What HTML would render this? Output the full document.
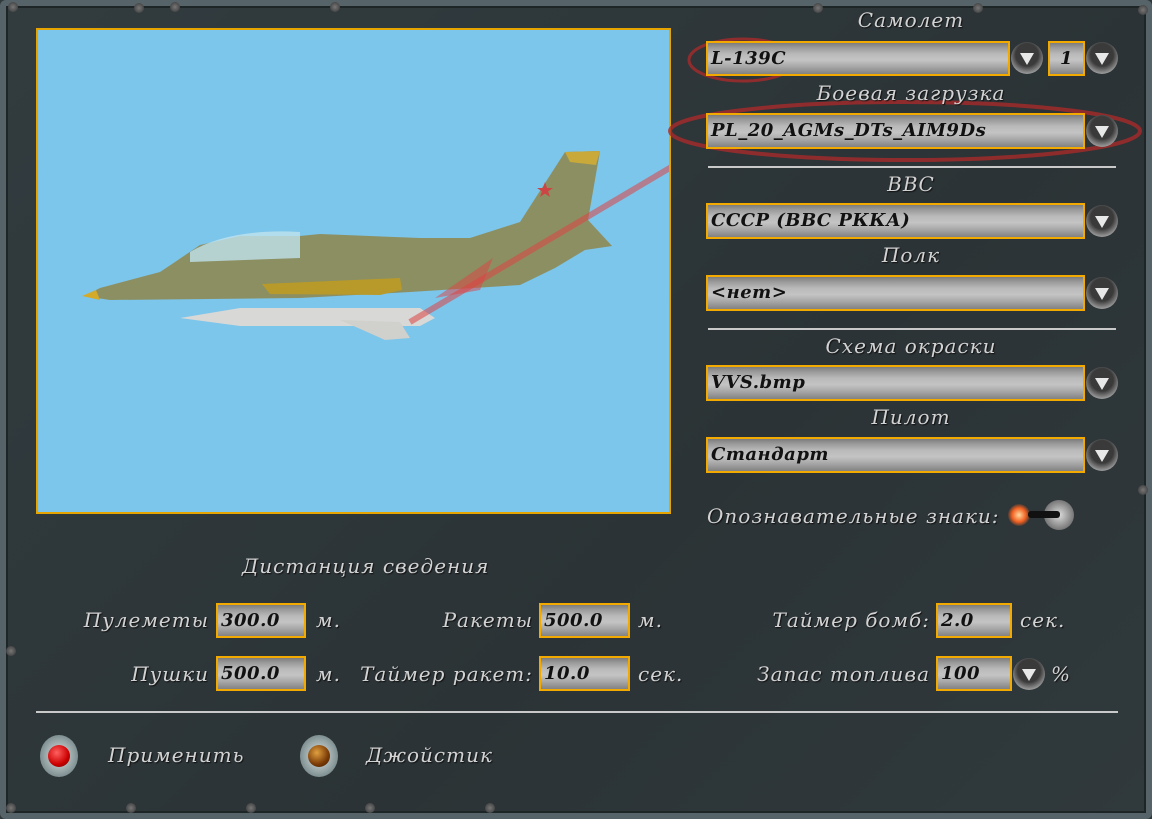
<!DOCTYPE html>
<html><head><meta charset="utf-8"><style>
*{margin:0;padding:0;box-sizing:border-box}
body{width:1152px;height:819px;overflow:hidden;background:#2f383b;position:relative;font-family:"DejaVu Serif","Liberation Serif",serif;font-style:italic;color:#d6d6d6}
.frame{position:absolute;left:0;top:0;width:1152px;height:819px;border:6px solid #56646a;border-radius:6px;box-shadow:inset 0 0 0 2px #1e2527;background:linear-gradient(135deg,#323c3f,#2b3336 60%,#30393c)}
.lbl{position:absolute;font-size:20px;letter-spacing:1px;white-space:nowrap;color:#d2d2d2;text-shadow:1px 1px 1px #111}
.f{position:absolute;border:2px solid #f2a900;background:linear-gradient(#7c7c7c 0%,#9a9a9a 15%,#b9b9b9 35%,#c4c4c4 55%,#a9a9a9 75%,#828282 100%);color:#111;font-weight:bold;font-size:18px;letter-spacing:0.5px;padding-left:3px;line-height:31px;white-space:nowrap;overflow:hidden}
.b{position:absolute;width:32px;height:32px;border-radius:50%;background:radial-gradient(circle at 50% 40%,#3a3a3a 45%,#6a6a6a 60%,#9a9a9a 75%,#555 100%)}
.b:after{content:"";position:absolute;left:9px;top:11px;border-left:7px solid transparent;border-right:7px solid transparent;border-top:12px solid #e8e8e8}
.hr{position:absolute;height:2px;background:#c9c9c9}
.c{text-align:center}
.scr{position:absolute;width:10px;height:10px;border-radius:50%;background:radial-gradient(#777,#333)}
</style></head><body>
<div class="frame"></div>
<div class="scr" style="left:8px;top:2px"></div><div class="scr" style="left:170px;top:2px"></div><div class="scr" style="left:330px;top:2px"></div>
<div class="scr" style="left:134px;top:3px"></div>
<div class="scr" style="left:6px;top:646px"></div>
<div class="scr" style="left:1138px;top:5px"></div><div class="scr" style="left:1138px;top:485px"></div>
<div class="scr" style="left:6px;top:803px"></div><div class="scr" style="left:126px;top:803px"></div><div class="scr" style="left:246px;top:803px"></div><div class="scr" style="left:365px;top:803px"></div><div class="scr" style="left:485px;top:803px"></div>
<div class="scr" style="left:813px;top:3px"></div><div class="scr" style="left:973px;top:3px"></div>

<div style="position:absolute;left:36px;top:28px;width:635px;height:486px;border:2px solid #e6a400;background:#7cc5eb;overflow:hidden">
<svg width="635" height="486" viewBox="36 28 635 486" style="position:absolute;left:-2px;top:-2px">
<path d="M565 152 L600 151 L588 220 L612 246 L585 250 L555 268 L520 285 L410 292 L300 298 L110 300 L84 296 L100 288 L160 272 L175 262 L200 245 L240 236 L300 236 L320 234 L420 238 L470 238 L520 222 Z" fill="#8c8f62"/>
<path d="M565 152 L600 151 L596 165 L570 162 Z" fill="#c9a93a"/>
<path d="M82 296 L96 290 L100 300 Z" fill="#d4aa2a"/>
<path d="M190 252 Q230 228 300 232 L300 258 L190 262 Z" fill="#bfe2ee" opacity=".8"/>
<path d="M262 284 L400 278 L402 290 L380 295 L270 294 Z" fill="#b89a2a"/>
<path d="M180 318 L240 308 L420 308 L435 318 L420 326 L240 326 Z" fill="#d8d8d6"/>
<path d="M340 320 L400 322 L410 338 L385 340 Z" fill="#d0d0cc"/>
<path d="M545 182 l5 15 l-13 -9 h16 l-13 9 z" fill="#c44"/>
<path d="M700 150 L410 322" stroke="#d44" stroke-width="6" opacity=".55"/>
<path d="M435 298 L493 258 L480 290 Z" fill="#d44" opacity=".5"/>
</svg></div>

<svg style="position:absolute;left:0;top:0" width="1152" height="819">
<ellipse cx="743" cy="60" rx="54" ry="21" fill="none" stroke="#a82a2a" stroke-width="3" opacity=".8"/>
<ellipse cx="905" cy="131" rx="235" ry="29" fill="none" stroke="#a82a2a" stroke-width="4" opacity=".8"/>
</svg>

<div class="lbl c" style="left:706px;width:410px;top:8px">Самолет</div>
<div class="f" style="left:706px;top:41px;width:304px;height:35px">L-139C</div>
<div class="b" style="left:1011px;top:42px"></div>
<div class="f" style="left:1048px;top:41px;width:37px;height:35px;text-align:center;padding:0">1</div>
<div class="b" style="left:1086px;top:42px"></div>
<div class="lbl c" style="left:706px;width:410px;top:81px">Боевая загрузка</div>
<div class="f" style="left:706px;top:113px;width:379px;height:36px">PL_20_AGMs_DTs_AIM9Ds</div>
<div class="b" style="left:1086px;top:115px"></div>
<div class="hr" style="left:708px;top:166px;width:408px"></div>
<div class="lbl c" style="left:706px;width:410px;top:172px">ВВС</div>
<div class="f" style="left:706px;top:203px;width:379px;height:36px">СССР (ВВС РККА)</div>
<div class="b" style="left:1086px;top:205px"></div>
<div class="lbl c" style="left:706px;width:410px;top:243px">Полк</div>
<div class="f" style="left:706px;top:275px;width:379px;height:36px">&lt;нет&gt;</div>
<div class="b" style="left:1086px;top:277px"></div>
<div class="hr" style="left:708px;top:328px;width:408px"></div>
<div class="lbl c" style="left:706px;width:410px;top:334px">Схема окраски</div>
<div class="f" style="left:706px;top:365px;width:379px;height:36px">VVS.bmp</div>
<div class="b" style="left:1086px;top:367px"></div>
<div class="lbl c" style="left:706px;width:410px;top:405px">Пилот</div>
<div class="f" style="left:706px;top:437px;width:379px;height:36px">Стандарт</div>
<div class="b" style="left:1086px;top:439px"></div>

<div class="lbl" style="left:707px;top:504px">Опознавательные знаки:</div>
<div style="position:absolute;left:1008px;top:504px;width:22px;height:22px;border-radius:50%;background:radial-gradient(#ffd9a0,#f06020 45%,rgba(200,60,20,0) 75%)"></div>
<div style="position:absolute;left:1044px;top:500px;width:30px;height:30px;border-radius:50%;background:radial-gradient(#ddd,#777 70%,#444)"></div>
<div style="position:absolute;left:1028px;top:511px;width:32px;height:7px;background:#111;border-radius:3px"></div>

<div class="lbl" style="left:242px;top:554px">Дистанция сведения</div>

<div class="lbl" style="right:943px;top:608px">Пулеметы</div>
<div class="f" style="left:216px;top:603px;width:90px;height:35px">300.0</div>
<div class="lbl" style="left:316px;top:608px">м.</div>
<div class="lbl" style="right:619px;top:608px">Ракеты</div>
<div class="f" style="left:539px;top:603px;width:91px;height:35px">500.0</div>
<div class="lbl" style="left:638px;top:608px">м.</div>
<div class="lbl" style="right:222px;top:608px">Таймер бомб:</div>
<div class="f" style="left:936px;top:603px;width:76px;height:35px">2.0</div>
<div class="lbl" style="left:1020px;top:608px">сек.</div>

<div class="lbl" style="right:943px;top:662px">Пушки</div>
<div class="f" style="left:216px;top:656px;width:90px;height:35px">500.0</div>
<div class="lbl" style="left:316px;top:662px">м.</div>
<div class="lbl" style="right:619px;top:662px">Таймер ракет:</div>
<div class="f" style="left:539px;top:656px;width:91px;height:35px">10.0</div>
<div class="lbl" style="left:638px;top:662px">сек.</div>
<div class="lbl" style="right:222px;top:662px">Запас топлива</div>
<div class="f" style="left:936px;top:656px;width:76px;height:35px">100</div>
<div class="b" style="left:1013px;top:658px"></div>
<div class="lbl" style="left:1051px;top:662px">%</div>

<div class="hr" style="left:36px;top:711px;width:1082px"></div>

<div style="position:absolute;left:40px;top:735px;width:38px;height:42px;border-radius:50%;background:radial-gradient(#e0e6e6,#7f9092 70%,#3d4a4c)"></div>
<div style="position:absolute;left:48px;top:745px;width:22px;height:22px;border-radius:50%;background:radial-gradient(circle at 40% 35%,#ff6060,#c00 60%,#600)"></div>
<div class="lbl" style="left:108px;top:743px">Применить</div>
<div style="position:absolute;left:300px;top:735px;width:38px;height:42px;border-radius:50%;background:radial-gradient(#e0e6e6,#7f9092 70%,#3d4a4c)"></div>
<div style="position:absolute;left:308px;top:745px;width:22px;height:22px;border-radius:50%;background:radial-gradient(circle at 40% 35%,#e0a040,#7a3a06 60%,#3a1a00)"></div>
<div class="lbl" style="left:366px;top:743px">Джойстик</div>
</body></html>
